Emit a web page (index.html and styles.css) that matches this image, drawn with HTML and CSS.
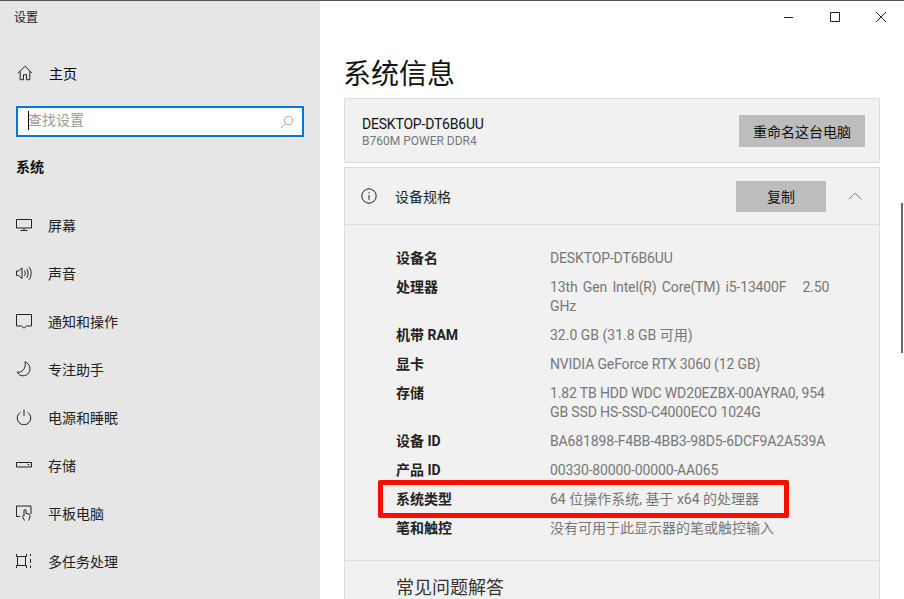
FILE: index.html
```html
<!DOCTYPE html>
<html lang="zh-CN">
<head>
<meta charset="utf-8">
<title>设置</title>
<link rel="stylesheet" href="styles.css">
</head>
<body>
<div class="window">
  <aside class="sidebar">
    <div class="app-title">设置</div>
    <a class="home">
      <svg class="ico" viewBox="0 0 16 16"><path d="M1 8.200 8 1.200l7 7M3.200 6.400v8.300h3.300v-5h3v5h3.300V6.400"/></svg>
      <span>主页</span>
    </a>
    <div class="search">
      <span class="caret"></span>
      <span class="placeholder">查找设置</span>
      <svg class="search-ico" viewBox="0 0 14 14"><circle cx="8.500" cy="5.500" r="4.300"/><path d="M5.500 8.500 1 13"/></svg>
    </div>
    <div class="section">系统</div>
    <nav class="nav">
      <a class="nav-item"><svg class="ico" viewBox="0 0 16 16"><path d="M.5 2.500h15v8.500H.5zM8 11v2.500M4.500 13.500h7"/></svg><span>屏幕</span></a>
      <a class="nav-item"><svg class="ico" viewBox="0 0 16 16"><path d="M.5 6v4.500h2L6 13.500V3L2.500 6zM8.500 5.500c1 1.500 1 4 0 5.500M10.800 3.800c1.700 2.500 1.700 6.500 0 9M13 1.800c2.800 3.500 2.800 9.500 0 13"/></svg><span>声音</span></a>
      <a class="nav-item"><svg class="ico" viewBox="0 0 16 16"><path d="M.5 1.500h15V13h-5L8 15.200 5.500 13h-5z"/></svg><span>通知和操作</span></a>
      <a class="nav-item"><svg class="ico" viewBox="0 0 16 16"><path d="M9 .8c2.500 1 5 3.500 5 7 0 4-3.200 7-6.800 7-2.800 0-5-1.500-6.200-3.800 4.500 1.300 9.500-3 8-10.200z"/></svg><span>专注助手</span></a>
      <a class="nav-item"><svg class="ico" viewBox="0 0 16 16"><path d="M4.500 3.200a6.800 6.800 0 1 0 7 0M8 .5V7"/></svg><span>电源和睡眠</span></a>
      <a class="nav-item"><svg class="ico" viewBox="0 0 16 16"><path d="M.5 5.500h15v4.500H.5zM11.500 7.700h2"/></svg><span>存储</span></a>
      <a class="nav-item"><svg class="ico" viewBox="0 0 16 16"><path d="M4 11.500H.5V1h14.500v8M8.500 15.500 6.500 11.500c-.3-1 .8-1.500 1.500-.5V5.500c0-1.200 2-1.200 2 0V8.500l3 .5c.8.200 1 .8 1 1.500 0 2-.5 3.500-1.500 5"/></svg><span>平板电脑</span></a>
      <a class="nav-item"><svg class="ico" viewBox="0 0 16 16"><path d="M.5 1v2.500h10V1M.5 15v-2.500h10V15M1.500 3.500v9M9.500 3.500v9M14.500 1v2M14.500 12.500V15M14.500 6v4" /></svg><span>多任务处理</span></a>
    </nav>
  </aside>
  <main class="main">
    <div class="controls">
      <svg class="ctl" viewBox="0 0 12 12"><path d="M1 6.500h9"/></svg>
      <svg class="ctl" viewBox="0 0 12 12"><path d="M1.500 1.500h9v9h-9z"/></svg>
      <svg class="ctl" viewBox="0 0 12 12"><path d="M1 1l10 10M11 1 1 11"/></svg>
    </div>
    <h1 class="page-title">系统信息</h1>
    <section class="card pc-card">
      <div>
        <div class="pc-name">DESKTOP-DT6B6UU</div>
        <div class="pc-model">B760M POWER DDR4</div>
      </div>
      <button class="btn rename">重命名这台电脑</button>
    </section>
    <section class="card spec-card">
      <header class="spec-head">
        <svg class="info" viewBox="0 0 16 16"><circle cx="8" cy="8" r="7.200"/><path d="M8 7v4.800M8 4.200v1.300"/></svg>
        <span class="spec-title">设备规格</span>
        <button class="btn copy">复制</button>
        <svg class="chev" viewBox="0 0 14 8"><path d="M1 7.200 7 1.200l6 6"/></svg>
      </header>
      <dl class="specs">
        <dt>设备名</dt><dd class="latin">DESKTOP-DT6B6UU</dd>
        <dt>处理器</dt><dd class="latin"><span class="spaced">13th Gen Intel(R) Core(TM) i5-13400F&nbsp;&nbsp; 2.50</span><br>GHz</dd>
        <dt>机带 RAM</dt><dd>32.0 GB (31.8 GB 可用)</dd>
        <dt>显卡</dt><dd class="latin">NVIDIA GeForce RTX 3060 (12 GB)</dd>
        <dt>存储</dt><dd class="latin">1.82 TB HDD WDC WD20EZBX-00AYRA0, 954<br>GB SSD HS-SSD-C4000ECO 1024G</dd>
        <dt>设备 ID</dt><dd class="latin">BA681898-F4BB-4BB3-98D5-6DCF9A2A539A</dd>
        <dt>产品 ID</dt><dd class="latin">00330-80000-00000-AA065</dd>
        <dt>系统类型</dt><dd>64 位操作系统, 基于 x64 的处理器</dd>
        <dt>笔和触控</dt><dd>没有可用于此显示器的笔或触控输入</dd>
      </dl>
      <div class="faq">常见问题解答</div>
    </section>
    <div class="highlight"></div>
    <div class="scrollbar"></div>
  </main>
</div>
</body>
</html>
```

FILE: styles.css
```css
* { box-sizing: border-box; }
html, body { margin: 0; height: 100%; overflow: hidden; }
body {
  font-family: Roboto, "Noto Sans CJK SC", sans-serif;
  font-size: 14px;
  color: #111;
  background: #fff;
}
.window {
  display: flex;
  width: 904px;
  height: 599px;
  border-top: 1px solid #555;
  overflow: hidden;
  position: relative;
}
.sidebar {
  width: 320px;
  flex: none;
  background: #e6e6e6;
  padding: 0 16px;
}
.app-title { font-size: 12px; line-height: 16px; margin: 9px 0 0 -2px; color: #222; }
.home { display: flex; align-items: center; gap: 16px; margin: 37px 0 0 1px; height: 20px; color: #000; }
.ico { width: 16px; height: 16px; fill: none; stroke: #222; stroke-width: 1; flex: none; }
.search {
  display: flex;
  align-items: center;
  height: 31px;
  width: 288px;
  margin-top: 23px;
  border: 2px solid #0078d7;
  background: #fff;
  padding: 0 8px 0 10px;
  position: relative;
}
.caret { position: absolute; left: 10px; top: 3px; width: 1px; height: 19px; background: #000; }
.placeholder { color: #9a9a9a; flex: 1; line-height: 20px; padding-bottom: 4px; }
.search-ico { width: 14px; height: 14px; fill: none; stroke: #a5a5a5; stroke-width: 1; }
.section { font-weight: 700; margin-top: 20px; line-height: 20px; height: 20px; color: #111; }
.nav { display: flex; flex-direction: column; margin-top: 24px; }
.nav-item { display: flex; align-items: center; gap: 16px; height: 48px; color: #222; }
.main { flex: 1; padding: 0 24px; position: relative; }
.controls { display: flex; justify-content: flex-end; gap: 34px; position: absolute; top: 10px; right: 17px; }
.ctl { width: 12px; height: 12px; fill: none; stroke: #222; stroke-width: 1; }
.page-title { margin: 51px 0 0 -1px; font-size: 28px; font-weight: 400; line-height: 45px; color: #111; }
.card { background: #f1f1f1; border: 1px solid #dcdcdc; width: 536px; }
.pc-card { display: flex; justify-content: space-between; align-items: center; height: 65px; margin-top: 1px; padding: 0 14px 0 17px; border-radius: 1px; }
.pc-name { line-height: 20px; color: #111; letter-spacing: -.2px; padding-top: 2px; }
.pc-model { font-size: 12px; line-height: 16px; color: #777; margin-top: -1px; }
.btn { font-family: inherit; font-size: 14px; border: 0; background: #bdbdbd; color: #111; padding: 0; }
.rename { width: 126px; height: 32px; }
.spec-card { margin-top: 4px; height: 440px; }
.spec-head { display: flex; align-items: center; height: 57px; border-bottom: 1px solid #dcdcdc; padding: 0 16px; }
.info { width: 16px; height: 16px; fill: none; stroke: #222; stroke-width: 1; flex: none; }
.spec-title { margin-left: 18px; flex: 1; color: #222; }
.copy { width: 90px; height: 31px; }
.chev { width: 14px; height: 8px; margin-left: 22px; margin-right: 1px; fill: none; stroke: #777; stroke-width: 1; }
.specs {
  display: grid;
  grid-template-columns: 154px 1fr;
  row-gap: 10px;
  margin: 0;
  padding: 24px 0 22px 51px;
  line-height: 19px;
  border-bottom: 1px solid #dcdcdc;
}
.specs dt { font-weight: 700; color: #222; }
.specs dd { margin: 0; color: #777; white-space: nowrap; }
.specs .latin { letter-spacing: -.14px; }
.spaced { word-spacing: 2px; }
.faq { font-size: 18px; line-height: 26px; margin: 14px 0 0 51px; color: #333; }
.highlight {
  position: absolute;
  left: 58px;
  top: 479px;
  width: 411px;
  height: 38px;
  border: 5px solid #f51000;
  border-radius: 2px;
}
.scrollbar { position: absolute; right: 1px; top: 202px; width: 2px; height: 150px; background: #666; }
```
